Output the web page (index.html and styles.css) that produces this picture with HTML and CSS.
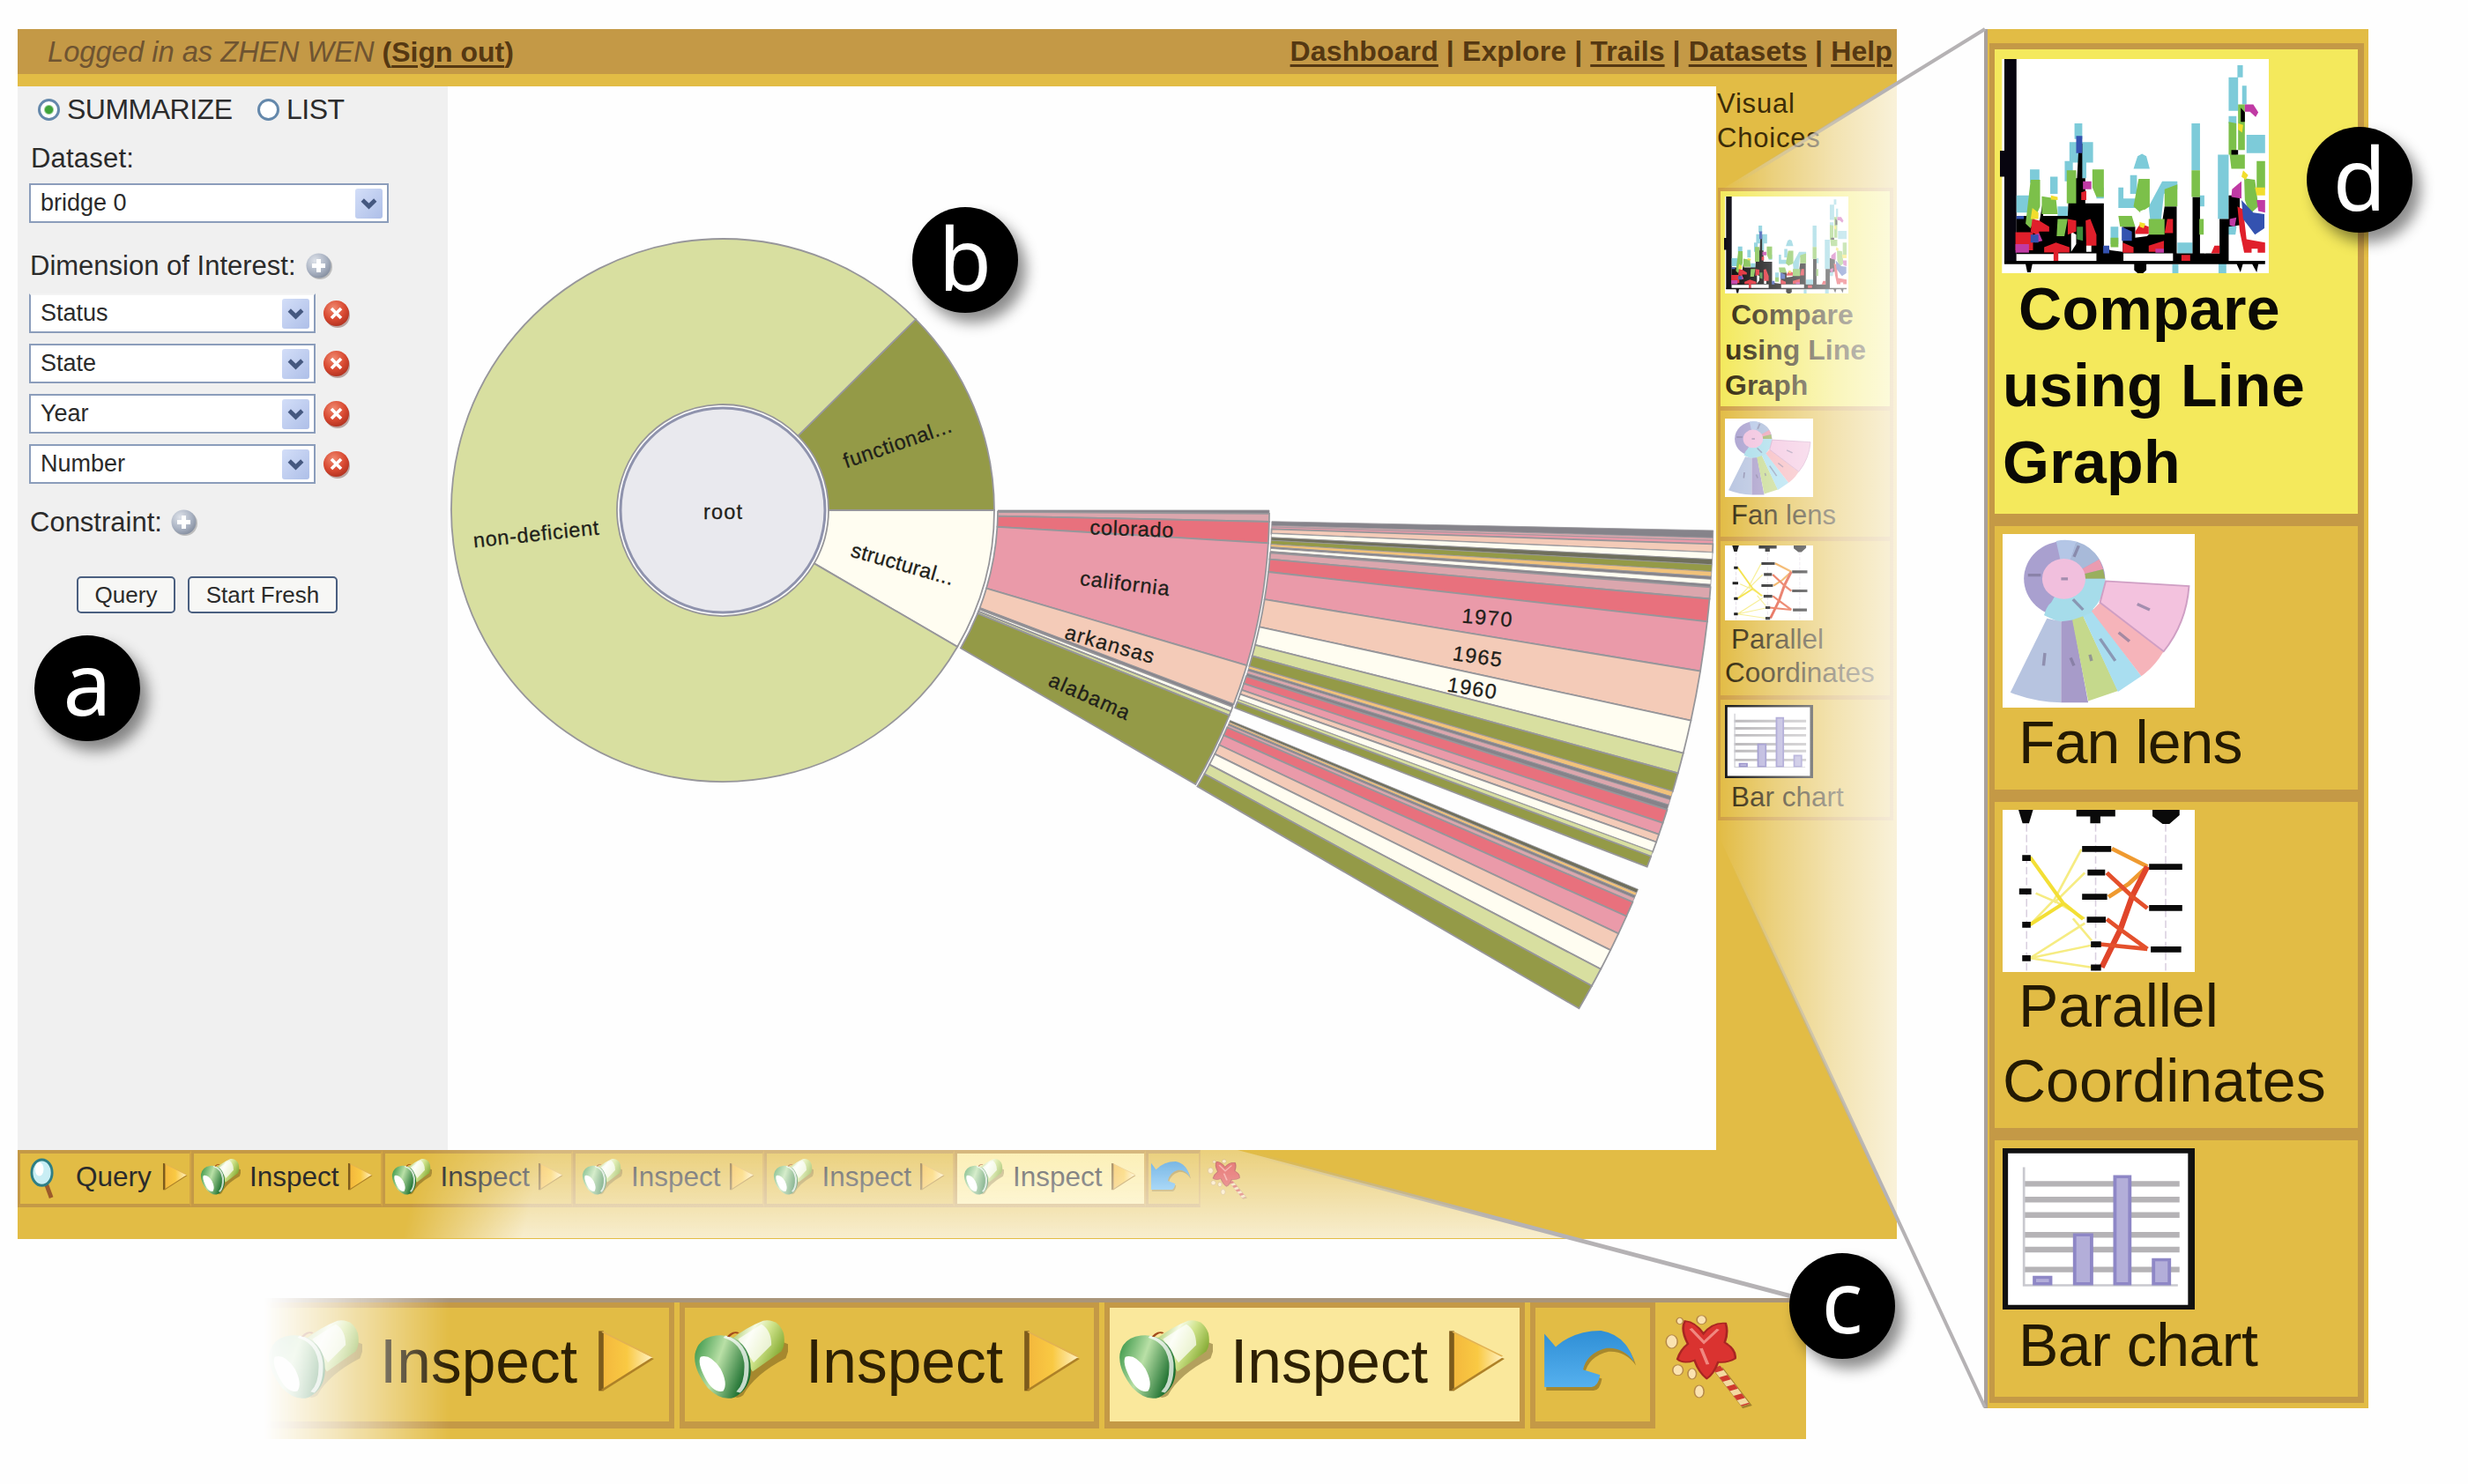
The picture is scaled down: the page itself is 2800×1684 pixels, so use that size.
FILE: index.html
```html
<!DOCTYPE html>
<html lang="en">
<head>
<meta charset="utf-8">
<title>Visual exploration</title>
<link rel="stylesheet" href="styles.css">
</head>
<body>
<svg class="defs" width="0" height="0" aria-hidden="true">
  <defs>
    <linearGradient id="lampBody" x1="0" y1="0" x2="1" y2=".5"><stop offset="0" stop-color="#8dbb3c"/><stop offset=".4" stop-color="#f6fbe6"/><stop offset=".65" stop-color="#cfe38a"/><stop offset="1" stop-color="#86ac35"/></linearGradient>
    <linearGradient id="lampRing" x1="0" y1="0" x2="1" y2=".4"><stop offset="0" stop-color="#2f9040"/><stop offset=".5" stop-color="#b9e0a6"/><stop offset="1" stop-color="#1d7030"/></linearGradient>
    <linearGradient id="play" x1="0" y1="0" x2="1" y2="0"><stop offset="0" stop-color="#f3b73c"/><stop offset=".5" stop-color="#f9c943"/><stop offset="1" stop-color="#fff1c4"/></linearGradient>
    <linearGradient id="undoBlue" x1="0" y1="0" x2="0" y2="1"><stop offset="0" stop-color="#2f8fd6"/><stop offset="1" stop-color="#55b0ee"/></linearGradient>
    <radialGradient id="orbGrey" cx=".35" cy=".3" r=".8"><stop offset="0" stop-color="#dfe3ea"/><stop offset=".6" stop-color="#a9b2c2"/><stop offset="1" stop-color="#7e8798"/></radialGradient>
    <radialGradient id="orbRed" cx=".4" cy=".3" r=".8"><stop offset="0" stop-color="#f08a70"/><stop offset=".55" stop-color="#d94a32"/><stop offset="1" stop-color="#a82c1c"/></radialGradient>
    <linearGradient id="arrowBox" x1="0" y1="0" x2="1" y2="1"><stop offset="0" stop-color="#d3def8"/><stop offset="1" stop-color="#aebfe8"/></linearGradient>
  </defs>
  <symbol id="lamp" viewBox="108 350 172 280" preserveAspectRatio="none">
    <path d="M135 480Q170 640 195 600Q215 530 272 475L280 430 240 400z" fill="#5d4a12" opacity=".45" transform="translate(4 10)"/>
    <path d="M178 420Q205 380 235 358Q262 350 272 400Q276 440 268 462L216 530z" fill="url(#lampBody)"/>
    <path d="M190 420L232 370Q250 390 250 440L218 500z" fill="#fff" opacity=".7"/>
    <path d="M112 470Q118 415 150 408Q195 400 210 480Q222 580 183 617Q160 632 135 585Q108 520 112 470z" fill="url(#lampRing)"/>
    <path d="M165 412Q200 430 205 500Q207 570 190 600" fill="none" stroke="#fff" stroke-width="8" opacity=".75"/>
    <path d="M122 480Q140 470 158 520Q172 570 163 596Q145 604 130 550Q116 500 122 480z" fill="#fff"/>
    <path d="M172 412Q182 392 190 400" fill="none" stroke="#a24a1c" stroke-width="5"/>
  </symbol>
  <symbol id="next" viewBox="698 393 106 214" preserveAspectRatio="none">
    <path d="M706 402V598L800 490z" fill="url(#play)"/>
    <path d="M706 400V602" stroke="#7d5b1c" stroke-width="9"/>
    <path d="M708 600L800 492" stroke="#ae8127" stroke-width="6"/>
    <path d="M708 403L798 485" stroke="#e2b252" stroke-width="4"/>
  </symbol>
  <symbol id="undo" viewBox="994 152 198 212" preserveAspectRatio="none">
    <path id="undoShape" d="M998 168L1022 212Q1060 158 1118 158Q1172 172 1188 262Q1165 212 1130 216Q1088 232 1080 288L1116 306Q1112 345 1098 346H998z" fill="#6b5316" opacity=".5" transform="translate(4 12)"/>
    <path d="M998 168L1022 212Q1060 158 1118 158Q1172 172 1188 262Q1165 212 1130 216Q1088 232 1080 288L1116 306Q1112 345 1098 346H998z" fill="url(#undoBlue)"/>
  </symbol>
  <symbol id="wand" viewBox="1250 98 192 330" preserveAspectRatio="none">
    <path d="M1366 285L1428 415" stroke="#7a5a1e" stroke-width="22" opacity=".6"/>
    <path d="M1362 278L1424 408" stroke="#f3d9a0" stroke-width="19"/>
    <path d="M1362 278L1424 408" stroke="#cf3a2e" stroke-width="19" stroke-dasharray="17 18"/>
    <path d="M1296 122Q1318 125 1335 165Q1355 125 1382 130Q1388 160 1380 195Q1405 220 1402 250Q1385 266 1366 262Q1356 305 1342 318Q1326 300 1316 256Q1292 270 1280 252Q1286 220 1302 200Q1286 150 1296 122z" fill="#da3330" stroke="#a82622" stroke-width="5"/>
    <path d="M1308 148L1336 195 1366 150M1330 215L1344 270" fill="none" stroke="#f08880" stroke-width="7"/>
    <g fill="#fbe3b0" stroke="#b78b4a" stroke-width="3"><ellipse cx="1268" cy="192" rx="12" ry="23"/><ellipse cx="1331" cy="118" rx="10" ry="15"/><ellipse cx="1285" cy="122" rx="7" ry="11"/><ellipse cx="1281" cy="289" rx="11" ry="18"/><ellipse cx="1311" cy="302" rx="9" ry="18"/><ellipse cx="1326" cy="362" rx="10" ry="21"/></g>
  </symbol>
  <symbol id="lens" viewBox="0 0 30 48" preserveAspectRatio="none">
    <path d="M19 30L25 46" stroke="#9c5a2a" stroke-width="5"/>
    <ellipse cx="14" cy="17" rx="12" ry="15" fill="#c9eef4" stroke="#2f7f86" stroke-width="3"/>
    <ellipse cx="11" cy="13" rx="5" ry="8" fill="#fff"/>
  </symbol>
  <symbol id="plus" viewBox="0 0 32 32"><circle cx="17" cy="17" r="14" fill="#8c8c8c" opacity=".5"/><circle cx="15.500" cy="15.500" r="14" fill="url(#orbGrey)"/><path d="M15.500 8V23M8 15.500H23" stroke="#fff" stroke-width="5"/></symbol>
  <symbol id="remove" viewBox="0 0 32 32"><circle cx="17" cy="18" r="14" fill="#7a4a40" opacity=".45"/><circle cx="15.500" cy="15.500" r="14.500" fill="url(#orbRed)"/><path d="M10 10L21 21M21 10L10 21" stroke="#fff" stroke-width="3.600"/></symbol>
  <symbol id="drop" viewBox="0 0 32 34" preserveAspectRatio="none"><rect width="32" height="34" rx="3" fill="url(#arrowBox)"/><path d="M8.500 13L16 20 23.500 13" fill="none" stroke="#45587f" stroke-width="5"/></symbol>

  <symbol id="t-line" viewBox="184 130 797 683" preserveAspectRatio="none">
    <path d="M190 130H981V813H190z" fill="#fff"/>
    <path d="M197 130H233V780H197zM184 422H200V505H184z" fill="#07050f"/>
    <g fill="#7dcbd9"><path d="M233 565H270V620H233zM273 482H301V525H273zM333 505H355V560H333zM355 600H385V640H355zM376 455H400V520H376zM405 335H428V385H405zM390 395H460V460H390zM420 440H440V510H420zM470 540H492V575H470zM535 540H550V575H600V605H535zM570 500H590V560H570zM592 440L605 432 618 440 628 480H580zM625 600L665 520H710V545L670 560 660 660 630 650zM752 335H777V485H752zM775 565H790V600H775zM830 435H862V640H830zM862 188H890V295H862zM888 150H904V188H888zM902 215H915V275H902zM862 312H885V335H862zM915 372H970V430H915zM512 665H535V720H512zM710 715H755V750H710zM695 785H713V813H695zM832 780H855V813H832zM860 660H885V690H860z"/></g>
    <path d="M233 630H270L300 655 312 580V630H385L390 510H437V590H492V730L512 740 548 745V665H585V700L620 695 665 650 672 600H708V750H755V570H777V750H835V640H862V565H895V660L862 665V780H233zM418 400H428V520H412z" fill="#000"/>
    <g fill="#7cc04a"><path d="M275 515H303V600L275 670 260 655zM308 568L350 575 355 625H308zM355 640H385L375 695H352zM382 485H410V590H382zM458 482H492V570H470L458 540zM535 630H575L585 665H540zM595 512H628V600L600 620 580 600zM625 640H672V690H625zM672 545L710 530V600H672zM752 485H777V570H752zM775 640H788V690H775zM862 330L885 335V435H862zM865 435H910V480H870zM890 275H910V420H890zM945 455H970V545H945zM908 510L940 515 950 600 925 625 910 580zM512 700H535V730H512z"/></g>
    <g fill="#fff"><path d="M233 752H345V775H233zM355 750H470V775H355zM550 750H697V775H550zM395 680L410 690V720L395 745zM440 710H455V745H440zM600 615L612 610 615 655 600 650zM870 485H908V510L880 540 865 560zM885 670L905 690 915 775H870zM790 690H830V740L790 750z"/></g>
    <g fill="#e01f2b"><path d="M230 682H282V740H230zM315 730L350 715 390 730V747H357V775H343V747H315zM438 645L452 640 470 690V725H440zM585 680L600 655 625 665V688H585zM548 715L580 730V748H548zM625 725L670 710V745H625zM680 640H697V685H672zM722 755H748V775H722zM820 725H835V750H810zM888 600L905 610 915 705 970 715V748H948V735H930V748H908L895 680zM280 640L300 645 330 665V680H300V695L275 680zM385 640L410 645V680L385 690zM425 555L440 550V580H425z"/></g>
    <g fill="#c03aa4"><path d="M230 720H270V748H230zM430 520H455V545H430zM910 275H935L950 300 942 315 925 298H910zM872 545L900 520V575L870 570zM945 580H970V620L950 615zM865 640L885 635 880 665 865 660zM645 735H670V748H645zM285 690L300 685 310 710 290 715z"/></g>
    <g fill="#3452b0"><path d="M410 375H428V430H410zM545 665L575 680V710H545zM275 690H298V715H275zM490 725H508V750H490zM900 580L935 620 968 625V670L940 690 905 640zM233 630H255V640H233z"/></g>
    <g fill="#f2de2d"><path d="M280 605L298 620V640H275zM940 540H970V565H945zM890 335L905 340 902 365 890 355zM905 485L920 500 912 515 900 505zM335 565L355 570V580L335 578zM598 650L615 655 610 670 598 665z"/></g>
    <path d="M898 285L910 300V330H898zM870 420H890V435H870zM197 774H970V784H197zM260 784H280L275 810H265zM582 784H618V803L608 813H592L582 803zM886 784H904L897 810zM932 784H950L945 810z" fill="#000"/>
    <path d="M412 665H430V710L412 705z" fill="#3d8c3a"/>
  </symbol>

  <symbol id="t-fan" viewBox="187 128 568 550" preserveAspectRatio="none">
    <path d="M187 128H755V678H187z" fill="#fff"/>
    <circle cx="370" cy="270" r="120" fill="#a9a0cf"/>
    <path d="M370 270L345 150A120 122 0 0 1 405 152z" fill="#b4c6e6"/>
    <path d="M370 270L405 152A120 122 0 0 1 473 208z" fill="#a8bad9"/>
    <path d="M370 270L473 208 484 240z" fill="#ea9bb0"/><path d="M370 270L484 240 490 270z" fill="#9aaf5e"/>
    <path d="M370 270H490A120 130 0 0 1 310 385z" fill="#a6dcea"/>
    <circle cx="368" cy="270" r="64" fill="#f1bfdd"/>
    <path d="M310 385Q320 340 350 338L400 335Q450 350 460 375L420 395Q390 405 350 405z" fill="#a6dcea"/>
    <path d="M318 395L210 630Q280 660 360 662V405z" fill="#b7c4e0"/>
    <path d="M360 405V662H440L395 400z" fill="#a79bc9"/>
    <path d="M393 400L440 657 528 625 425 388z" fill="#c5d98c"/>
    <path d="M425 388L528 628 597 578 455 375z" fill="#a9def0"/>
    <path d="M450 372L597 578Q635 550 663 500L475 345z" fill="#f6b4ba"/>
    <path d="M475 345L663 500Q730 410 738 293L492 277z" fill="#f3c2de" stroke="#cf9fc4" stroke-width="5"/>
    <g stroke="#7a7396" stroke-width="9" opacity=".65"><path d="M585 350L622 368M530 440L562 468M475 460L520 530M312 505L308 545M388 520L398 545M445 510L450 530M262 258H300M412 165L398 200M360 270H380M395 335L425 368"/></g>
  </symbol>

  <symbol id="t-par" viewBox="187 1005 568 515" preserveAspectRatio="none">
    <path d="M187 1005H755V1520H187z" fill="#fff"/>
    <path d="M258 1050V1520M462 1050V1520M669 1050V1520" stroke="#d9cfdf" stroke-width="4" stroke-dasharray="24 10"/>
    <g fill="none" stroke="#f6ec82" stroke-width="7"><path d="M268 1370L340 1290 420 1130M285 1270L350 1300 430 1350M268 1476L430 1365M268 1476L450 1435M268 1476L450 1505M340 1300L430 1205M395 1350L450 1420"/></g>
    <path d="M268 1155L365 1300 425 1352M268 1370L370 1300" fill="none" stroke="#f3df35" stroke-width="11"/>
    <path d="M510 1128L615 1185M500 1282L560 1240 610 1190" fill="none" stroke="#ef9a30" stroke-width="13"/>
    <path d="M615 1185L570 1280 535 1385 480 1505" fill="none" stroke="#e0452a" stroke-width="17"/>
    <path d="M495 1205L570 1280 615 1318M495 1352L535 1385 615 1447M475 1432L615 1447" fill="none" stroke="#e4502c" stroke-width="13"/>
    <g stroke="#0a0a0a" stroke-width="19"><path d="M245 1158H270M236 1264H272M245 1370H270M245 1476H270M422 1129H508M438 1204H490M422 1281H496M436 1354H492M448 1432H478M448 1506H478M620 1186H718M620 1317H718M625 1448H715"/></g>
    <path d="M234 1005H277L265 1048H246zM405 1005H520V1026H476V1048H446V1026H405zM630 1005H710V1022L680 1050H660L630 1025z" fill="#0a0a0a"/>
  </symbol>

  <symbol id="t-bar" viewBox="187 570 568 512" preserveAspectRatio="none">
    <path d="M187 570H755V1082H187z" fill="#111"/><path d="M203 586H735V1067H203z" fill="#fff"/>
    <path d="M247 683H710M247 733H710M247 782H710M247 845H710M247 892H710M247 955H710" stroke="#b5b3b6" stroke-width="18"/>
    <path d="M250 630V1005H705" fill="none" stroke="#c9c9cf" stroke-width="7"/>
    <g fill="#b3aed9" stroke="#8e87c6" stroke-width="10"><path d="M281 980H329V1000H281zM400 845H450V1000H400zM519 660H563V1000H519zM633 924H680V1000H633z"/></g>
  </symbol>
</svg>

<div class="page">
  <div class="left-side">
    <div class="window">
      <header class="topbar">
        <div class="login"><i>Logged in as ZHEN WEN</i> <b>(<a>Sign out</a>)</b></div>
        <nav class="nav"><a>Dashboard</a> | Explore | <a>Trails</a> | <a>Datasets</a> | <a>Help</a></nav>
      </header>
      <div class="body">
        <form class="query">
          <div class="modes">
            <span class="radio on"></span><label class="m1">SUMMARIZE</label>
            <span class="radio"></span><label class="m2">LIST</label>
          </div>
          <div class="title t-data">Dataset:</div>
          <div class="select wide"><span>bridge 0</span><svg><use href="#drop"/></svg></div>
          <div class="title t-dim">Dimension of Interest: <svg class="orb"><use href="#plus"/></svg></div>
          <div class="dims">
            <div class="dim"><div class="select open"><span>Status</span><svg><use href="#drop"/></svg></div><svg class="orb"><use href="#remove"/></svg></div>
            <div class="dim"><div class="select"><span>State</span><svg><use href="#drop"/></svg></div><svg class="orb"><use href="#remove"/></svg></div>
            <div class="dim"><div class="select"><span>Year</span><svg><use href="#drop"/></svg></div><svg class="orb"><use href="#remove"/></svg></div>
            <div class="dim"><div class="select"><span>Number</span><svg><use href="#drop"/></svg></div><svg class="orb"><use href="#remove"/></svg></div>
          </div>
          <div class="title t-con">Constraint: <svg class="orb"><use href="#plus"/></svg></div>
          <div class="buttons"><span class="btn b1">Query</span><span class="btn b2">Start Fresh</span></div>
        </form>
        <main class="canvas">
          <svg class="chart" viewBox="508 98 1439 1207">
            <g id="slices"></g>
            <g class="labels">
              <text x="820" y="589" textLength="44">root</text>
              <text transform="translate(608 606) rotate(-6)" y="8" textLength="143">non-deficient</text>
              <text transform="translate(1018 503) rotate(-19)" y="8" textLength="128">functional...</text>
              <text transform="translate(1024 640) rotate(16)" y="8" textLength="120">structural...</text>
              <text transform="translate(1284 600) rotate(2)" y="8" textLength="95">colorado</text>
              <text transform="translate(1276 662) rotate(7)" y="8" textLength="102">california</text>
              <text transform="translate(1259 731) rotate(16)" y="8" textLength="104">arkansas</text>
              <text transform="translate(1236 790) rotate(24)" y="8" textLength="98">alabama</text>
              <text transform="translate(1687 701) rotate(5)" y="8" textLength="57">1970</text>
              <text transform="translate(1676 745) rotate(8)" y="8" textLength="56">1965</text>
              <text transform="translate(1670 781) rotate(9)" y="8" textLength="56">1960</text>
            </g>
          </svg>
        </main>
        <aside class="choices">
          <h2>Visual<br>Choices</h2>
          <div class="choice s1"><svg><use href="#t-line"/></svg><p>Compare<br>using Line<br>Graph</p></div>
          <div class="choice s2"><svg><use href="#t-fan"/></svg><p>Fan lens</p></div>
          <div class="choice s3"><svg><use href="#t-par"/></svg><p>Parallel<br>Coordinates</p></div>
          <div class="choice s4"><svg><use href="#t-bar"/></svg><p>Bar chart</p></div>
        </aside>
      </div>
      <footer class="trail">
        <div class="step q"><svg class="ic"><use href="#lens"/></svg><span>Query</span><svg class="nx"><use href="#next"/></svg></div>
        <div class="step"><svg class="ic"><use href="#lamp"/></svg><span>Inspect</span><svg class="nx"><use href="#next"/></svg></div>
        <div class="step"><svg class="ic"><use href="#lamp"/></svg><span>Inspect</span><svg class="nx"><use href="#next"/></svg></div>
        <div class="step"><svg class="ic"><use href="#lamp"/></svg><span>Inspect</span><svg class="nx"><use href="#next"/></svg></div>
        <div class="step"><svg class="ic"><use href="#lamp"/></svg><span>Inspect</span><svg class="nx"><use href="#next"/></svg></div>
        <div class="step cur"><svg class="ic"><use href="#lamp"/></svg><span>Inspect</span><svg class="nx"><use href="#next"/></svg></div>
        <div class="step tool"><svg class="un"><use href="#undo"/></svg></div>
        <svg class="wd"><use href="#wand"/></svg>
      </footer>
    </div>

    <div class="zoom-trail">
      <div class="zstep z1"><svg class="ic"><use href="#lamp"/></svg><span>Inspect</span><svg class="nx"><use href="#next"/></svg></div>
      <div class="zstep z2"><svg class="ic"><use href="#lamp"/></svg><span>Inspect</span><svg class="nx"><use href="#next"/></svg></div>
      <div class="zstep z3"><svg class="ic"><use href="#lamp"/></svg><span>Inspect</span><svg class="nx"><use href="#next"/></svg></div>
      <div class="zstep z4"><svg class="un"><use href="#undo"/></svg></div>
      <svg class="wd"><use href="#wand"/></svg>
    </div>
  </div>

  <aside class="zoom-choices">
    <div class="zc c1"><svg><use href="#t-line"/></svg><p>Compare<br>using Line<br>Graph</p></div>
    <div class="zc c2"><svg><use href="#t-fan"/></svg><p>Fan lens</p></div>
    <div class="zc c3"><svg><use href="#t-par"/></svg><p>Parallel<br>Coordinates</p></div>
    <div class="zc c4"><svg><use href="#t-bar"/></svg><p>Bar chart</p></div>
  </aside>

  <svg class="veil" viewBox="0 0 2800 1684">
    <defs>
      <linearGradient id="vr" gradientUnits="userSpaceOnUse" x1="1950" y1="0" x2="2152" y2="0"><stop offset="0" stop-color="#fff" stop-opacity="0"/><stop offset=".3" stop-color="#fff" stop-opacity=".3"/><stop offset=".65" stop-color="#fff" stop-opacity=".58"/><stop offset="1" stop-color="#fff" stop-opacity=".8"/></linearGradient>
      <linearGradient id="vb" gradientUnits="userSpaceOnUse" x1="0" y1="1305" x2="0" y2="1405"><stop offset="0" stop-color="#fff" stop-opacity=".3"/><stop offset="1" stop-color="#fff" stop-opacity=".74"/></linearGradient>
      <linearGradient id="side" gradientUnits="userSpaceOnUse" x1="470" y1="1345" x2="600" y2="1375"><stop offset="0" stop-color="#000"/><stop offset="1" stop-color="#fff"/></linearGradient>
      <mask id="vm"><path d="M400 1300H2200V1410H400z" fill="url(#side)"/></mask>
      <linearGradient id="l1" gradientUnits="userSpaceOnUse" x1="1965" y1="0" x2="2130" y2="0"><stop offset="0" stop-color="#b5b2b4" stop-opacity="0"/><stop offset="1" stop-color="#b5b2b4"/></linearGradient>
      <linearGradient id="l2" gradientUnits="userSpaceOnUse" x1="1416" y1="0" x2="1700" y2="0"><stop offset="0" stop-color="#b5b2b4" stop-opacity="0"/><stop offset="1" stop-color="#b5b2b4"/></linearGradient>
    </defs>
    <path d="M1950 217L2152 94V1382L1951 951z" fill="url(#vr)"/>
    <path d="M400 1305H1404L1782 1405H400z" fill="url(#vb)" mask="url(#vm)"/>
    <path d="M1965 210L2252 33" stroke="url(#l1)" stroke-width="4"/>
    <path d="M1956 960L2252 1597" stroke="url(#l1)" stroke-width="4"/>
    <path d="M1416 1308L2040 1473" stroke="url(#l2)" stroke-width="5"/>
  </svg>
  <div class="badge ba">a</div>
  <div class="badge bb">b</div>
  <div class="badge bc">c</div>
  <div class="badge bd">d</div>
</div>
<script src="chart.js"></script>
</body>
</html>
```
FILE: styles.css
```css
* { box-sizing: border-box; }
body { margin: 0; background: #fefefe; font-family: "Liberation Sans", Arial, sans-serif; color: #2b2b2b; }
p, h2 { margin: 0; }
svg { display: block; flex: none; }
.defs { position: absolute; }
.page { position: relative; width: 2800px; height: 1684px; overflow: hidden; padding: 33px 0 0 20px; display: flex; align-items: flex-start; }
.left-side { width: 2132px; flex: none; }
.window { height: 1373px; background: #e2bc45; display: flex; flex-direction: column; }

.topbar { height: 65px; flex: none; background: #c49946; border-bottom: 14px solid #e2bc45; display: flex; justify-content: space-between; padding: 0 5px 0 34px; font-size: 32px; line-height: 51px; white-space: nowrap; }
.topbar a { text-decoration: underline; text-decoration-thickness: 3px; text-underline-offset: 4px; }
.login i { color: #6f5431; font-size: 32.700px; }
.login b { color: #553812; }
.nav { font-weight: bold; color: #553812; letter-spacing: .12px; }

.body { display: flex; height: 1207px; flex: none; }
.query { width: 488px; background: #f0f0f0; padding: 8px 0 0 13px; margin: 0; }
.canvas { width: 1439px; background: #fefefe; }
.chart { width: 1439px; height: 1207px; }

.modes { display: flex; align-items: center; height: 36px; font-size: 32px; letter-spacing: -.5px; padding-left: 10px; }
.radio { width: 25px; height: 25px; border: 3px solid #6488ab; border-radius: 50%; background: #fff; flex: none; }
.radio.on { background: radial-gradient(circle, #3fa33a 0 4px, #fff 6px); }
.modes label { margin: 0 28px 0 8px; }
.m1 { width: 188px; }
.title { font-size: 31px; line-height: 36px; display: flex; align-items: center; white-space: pre; }
.orb { width: 32px; height: 32px; }
.title .orb { margin-left: 2px; }
.t-data { margin-top: 20px; padding-left: 2px; letter-spacing: .2px; }
.select { width: 325px; height: 45px; background: #fff; border: 2px solid #8b9dbb; padding: 0 5px 0 11px; display: flex; align-items: center; justify-content: space-between; font-size: 27px; }
.select svg { width: 31px; height: 34px; }
.select.wide { width: 408px; margin-top: 10px; }
.select.open { border-top-color: #f4f4f4; }
.t-dim { margin-top: 31px; padding-left: 1px; }
.dims { margin-top: 13px; display: flex; flex-direction: column; gap: 12px; }
.dim { display: flex; align-items: center; gap: 8px; }
.t-con { margin-top: 26px; padding-left: 1px; }
.t-con .orb { margin-left: 0; }
.buttons { display: flex; gap: 14px; margin: 43px 0 0 54px; }
.btn { height: 42px; border: 2.500px solid #4a5f80; border-radius: 5px; background: #f7f7f5; font-size: 26px; line-height: 38px; text-align: center; }
.b1 { width: 112px; }
.b2 { width: 170px; }

.choices { width: 205px; padding: 0 4px 0 2px; }
.choices h2 { font-size: 31px; font-weight: normal; line-height: 39px; height: 116px; letter-spacing: .8px; color: #3c2c08; margin-left: -1px; }
.choice { border: 4px solid #cf9f45; border-left-width: 3px; padding-left: 5px; margin-bottom: -3px; }
.choice p { font-size: 32px; line-height: 38px; text-indent: 7px; white-space: nowrap; color: #2f2406; }
.choice svg { width: 100px; }
.choice.s1 { height: 252px; background: #f3e95c; padding-top: 6px; margin-top: -1px; }
.s1 svg { width: 141px; height: 110px; margin-left: -1px; }
.s1 p { font-weight: bold; line-height: 40px; margin-top: 4px; }
.s2 { height: 151px; padding-top: 9px; }
.s2 svg { height: 89px; }
.s2 p { margin-top: 2px; font-size: 31px; }
.s3 { height: 183px; padding-top: 5px; }
.s3 svg { height: 85px; }
.choice.s3 p { margin-top: 2px; font-size: 31.500px; }
.s4 { height: 141px; padding-top: 6px; }
.s4 svg { height: 83px; }
.choice.s4 p { margin-top: 2px; font-size: 31.500px; }

.trail { display: flex; height: 65px; }
.step { width: 216.500px; height: 65px; border: 4px solid #c49946; border-left-width: 3px; display: flex; align-items: center; padding: 0 0 5px 7px; font-size: 31.500px; border-right: 2px solid #d2a545; }
.step .ic { width: 46px; height: 43px; margin-right: 10px; }
.step .nx { width: 29px; height: 32px; margin-left: 9px; }
.step.q { width: 197px; }
.step.q .ic { width: 29px; height: 47px; margin: 4px 23px 0 4px; }
.step.q .nx { margin-left: 12px; }
.cur { background: #fbe997; }
.step.tool { width: 62px; padding-left: 2px; }
.un { width: 46px; height: 36px; }
.wd { width: 47px; height: 47px; margin: 10px 0 0 7px; }

.zoom-trail { margin: 67px 0 0 280px; width: 1749px; height: 160px; border-top: 5px solid #a9957b; background: #e2bc45; display: flex; font-size: 69.500px; line-height: 80px; -webkit-mask-image: linear-gradient(90deg, transparent 0, rgba(0,0,0,.35) 80px, #000 210px); mask-image: linear-gradient(90deg, transparent 0, rgba(0,0,0,.35) 80px, #000 210px); }
.zstep { height: 143px; border: 6px solid #c49946; border-bottom-width: 8px; display: flex; align-items: center; color: #2d2004; margin-right: 6px; padding-bottom: 7px; }
.zstep .ic { width: 108px; height: 94px; margin: 0 20px 4px 9px; }
.zstep .nx { width: 66px; height: 72px; margin: 0 0 2px 22px; }
.z1 { width: 465px; border-left-color: transparent; }
.z1 .ic { margin-left: -3px; }
.z2 { width: 476px; }
.z3 { width: 477px; background: #fae89c; }
.z4 { width: 142px; margin-right: 0; }
.z4 .un { width: 106px; height: 72px; margin: 0 0 2px 8px; }
.zoom-trail .wd { width: 103px; height: 110px; margin: 13px 0 0 9px; }

.zoom-choices { margin-left: 99px; width: 436px; height: 1565px; background: #e2bc45; border-left: 4px solid #a9a09b; padding: 16px 5px 0 2px; flex: none; color: #241a03; }
.zc { border: 7px solid #c49946; border-left-width: 6px; padding-left: 9px; font-size: 68px; line-height: 87px; white-space: nowrap; text-indent: 18px; }
.zc p { margin-top: -3px; }
.zc svg { width: 218px; }
.c1 { height: 541px; background: #f4e95c; padding-top: 11px; color: #0b0a05; font-weight: bold; letter-spacing: .3px; }
.c1 svg { width: 305px; height: 243px; margin-left: -3px; }
.c2 { height: 313px; padding-top: 9px; letter-spacing: -.9px; }
.c2 svg { height: 197px; }
.c2 p { margin-top: -4px; }
.c3 { height: 384px; padding-top: 9px; line-height: 85px; }
.c3 svg { height: 184px; }
.c3 p { margin-top: -4px; }
.c4 { height: 305px; padding-top: 9px; letter-spacing: -.5px; }
.c4 svg { height: 183px; }
.c4 p { margin-top: -3px; }

.veil { position: absolute; left: 0; top: 0; width: 2800px; height: 1684px; }
.badge { position: absolute; width: 120px; height: 120px; border-radius: 50%; background: #000; color: #fff; font: 400 98px/114px "Noto Sans", sans-serif; text-align: center; box-shadow: 9px 11px 16px rgba(0,0,0,.45); }
.ba { left: 39px; top: 721px; }
.ba, .bc { line-height: 106px; }
.bb { left: 1035px; top: 235px; }
.bc { left: 2030px; top: 1422px; }
.bd { left: 2617px; top: 144px; }

.labels text { font-size: 23.500px; text-anchor: middle; fill: #1f1f1a; stroke: #1f1f1a; stroke-width: .3px; }
```
FILE: chart.js
```js
const CX = 820, CY = 579;
const C = {
  grey: '#85838a', lilac: '#dba6ad', red: '#e8717d', pink: '#ea9aa9', peach: '#f4cbb8',
  cream: '#fffdf1', lime: '#d8dfa0', olive: '#949a47', orange: '#f1c27a', mute: '#6f6f5c', line: '#97969a'
};
const host = document.getElementById('slices');
const pt = (r, deg) => {
  const t = deg * Math.PI / 180;
  return (CX + r * Math.cos(t)).toFixed(2) + ' ' + (CY + r * Math.sin(t)).toFixed(2);
};
function slice(r0, r1, a0, a1, fill, width) {
  const big = a1 - a0 > 180 ? 1 : 0;
  const p = document.createElementNS('http://www.w3.org/2000/svg', 'path');
  p.setAttribute('d', `M${pt(r0, a0)}L${pt(r1, a0)}A${r1} ${r1} 0 ${big} 1 ${pt(r1, a1)}L${pt(r0, a1)}A${r0} ${r0} 0 ${big} 0 ${pt(r0, a0)}z`);
  p.setAttribute('fill', fill);
  p.setAttribute('stroke', C.line);
  p.setAttribute('stroke-width', width);
  host.appendChild(p);
}
function ring(r0, r1, start, parts) {
  let a = start;
  for (const [end, name] of parts) {
    slice(r0, r1, a, end, C[name], end - a < 0.45 ? 0.8 : 1.8);
    a = end;
  }
}

// status
ring(120, 308, -44.7, [[0, 'olive'], [30.2, 'cream'], [315.3, 'lime']]);
const hub = document.createElementNS('http://www.w3.org/2000/svg', 'circle');
for (const [k, v] of Object.entries({ cx: CX, cy: CY, r: 116, fill: '#e9e9ee', stroke: '#8f93ad', 'stroke-width': 3 })) hub.setAttribute(k, v);
host.appendChild(hub);

// state
ring(312, 620, 0, [[0.35, 'grey'], [1.2, 'lilac'], [3.45, 'red'], [16.5, 'pink'], [20.8, 'peach'],
  [21.1, 'grey'], [21.6, 'cream'], [22.06, 'lime'], [30.1, 'olive']]);

// year
ring(623, 1124, 1.17, [[1.6, 'grey'], [1.75, 'lilac'], [1.96, 'pink'], [2.44, 'peach'], [2.84, 'cream'], [3.15, 'mute'],
  [3.55, 'olive'], [3.84, 'orange'], [4, 'grey'], [4.3, 'cream'], [4.46, 'grey'], [5.13, 'lilac'], [6.45, 'red'], [9.35, 'pink'],
  [12.26, 'peach'], [14.2, 'cream'], [15.4, 'lime'], [16.5, 'olive']]);
ring(623, 1124, 16.5, [[16.8, 'orange'], [17, 'grey'], [17.3, 'lilac'], [17.6, 'grey'], [18.4, 'red'], [19.1, 'pink'],
  [19.57, 'peach'], [20.17, 'cream'], [20.45, 'lime'], [21.1, 'olive']]);
ring(623, 1124, 22.5, [[22.72, 'mute'], [22.9, 'orange'], [23.05, 'grey'], [23.3, 'lilac'], [24.2, 'red'], [25.3, 'pink'],
  [26.36, 'peach'], [27.6, 'cream'], [28.7, 'lime'], [30.2, 'olive']]);
```
